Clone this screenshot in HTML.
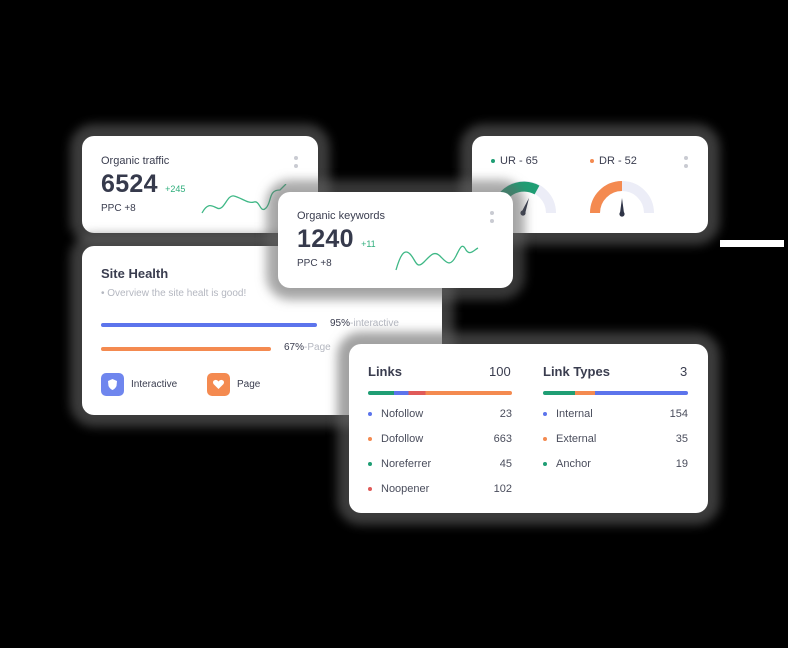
<!DOCTYPE html>
<html><head><meta charset="utf-8"><style>
*{box-sizing:border-box;margin:0;padding:0}
body{width:788px;height:648px;background:#000;position:relative;overflow:hidden;font-family:"Liberation Sans",sans-serif;color:#3a3d4f}
.c{position:absolute;background:#fff;border-radius:12px;box-shadow:0 0 10px 12px rgba(100,100,100,.6)}
.dots{position:absolute;width:4px}
.dots i{display:block;width:4px;height:4px;border-radius:50%;background:#c9cbd2;margin-bottom:4px}
.t{position:absolute;font-size:11px;color:#3a3d4f}
.big{position:absolute;font-size:25px;font-weight:bold;color:#363a4c;letter-spacing:.3px}
.g{color:#2fae7c;font-size:9px;letter-spacing:0}
.dot{display:inline-block;width:5px;height:5px;border-radius:50%;margin-right:9px;vertical-align:middle}
.row{position:absolute;font-size:11px;color:#4a4d5c;display:flex;justify-content:space-between}
</style></head><body>
<div style="position:absolute;left:720px;top:240px;width:64px;height:7px;background:#fff"></div>

<div class="c" style="left:82px;top:136px;width:236px;height:97px">
<div class="t" style="left:19px;top:19px">Organic traffic</div>
<div class="big" style="left:19px;top:34px">6524 <span class="g" style="font-weight:normal">+245</span></div>
<div class="t" style="left:19px;top:67px;font-size:10px">PPC +8</div>
<div class="dots" style="left:212px;top:20px"><i></i><i></i></div>
<svg style="position:absolute;left:118px;top:48px" width="96" height="34"><path d="M2 29 C8 18 12 22 17 24 C24 28 27 10 34 12 C42 14 48 20 54 18 C60 16 60 30 66 24 C72 18 68 6 80 6 L86 0" fill="none" stroke="#3fb886" stroke-width="1.3"/></svg>
</div>

<div class="c" style="left:82px;top:246px;width:360px;height:169px">
<div class="t" style="left:19px;top:20px;font-size:13px;font-weight:bold">Site Health</div>
<div class="t" style="left:19px;top:42px;font-size:10px;color:#b4b7c0">• Overview the site healt is good!</div>
<div style="position:absolute;left:19px;top:77px;width:216px;height:4px;border-radius:2px;background:#5c74ec"></div>
<div class="t" style="left:248px;top:72px;font-size:10px">95%<span style="color:#b4b7c0">-interactive</span></div>
<div style="position:absolute;left:19px;top:101px;width:170px;height:4px;border-radius:2px;background:#f48a50"></div>
<div class="t" style="left:202px;top:96px;font-size:10px">67%<span style="color:#b4b7c0">-Page</span></div>
<div style="position:absolute;left:19px;top:127px;width:23px;height:23px;border-radius:5px;background:#6f86ee"><svg width="23" height="23"><path d="M11.5 6 L16 8 L15.5 13 Q14 16 11.5 17 Q9 16 7.5 13 L7 8Z" fill="#fff"/></svg></div>
<div class="t" style="left:49px;top:133px;font-size:10px">Interactive</div>
<div style="position:absolute;left:125px;top:127px;width:23px;height:23px;border-radius:5px;background:#f48a50"><svg width="23" height="23"><path d="M11.5 16 L6.5 11 Q5 8 8 7 Q10 6.5 11.5 8.5 Q13 6.5 15 7 Q18 8 16.5 11Z" fill="#fff"/></svg></div>
<div class="t" style="left:155px;top:133px;font-size:10px">Page</div>
</div>

<div class="c" style="left:472px;top:136px;width:236px;height:97px">
<div class="t" style="left:19px;top:19px"><span class="dot" style="background:#1f9e74;width:4px;height:4px;margin-right:5px"></span>UR - 65</div>
<div class="t" style="left:118px;top:19px"><span class="dot" style="background:#f48a50;width:4px;height:4px;margin-right:5px"></span>DR - 52</div>
<div class="dots" style="left:212px;top:20px"><i></i><i></i></div>
<svg style="position:absolute;left:0;top:0" width="236" height="97">
<path d="M25 77 A27 27 0 0 1 79 77" fill="none" stroke="#ecedf7" stroke-width="10"/>
<path d="M25 77 A27 27 0 0 1 65 54" fill="none" stroke="#1f9e74" stroke-width="10"/>
<path d="M123 77 A27 27 0 0 1 177 77" fill="none" stroke="#ecedf7" stroke-width="10"/>
<path d="M123 77 A27 27 0 0 1 150 50" fill="none" stroke="#f48a50" stroke-width="10"/>
<path d="M49 77 L57 62 L53 78Z" fill="#2f3447"/><circle cx="51" cy="77" r="2.6" fill="#2f3447"/>
<path d="M148 77 L150 62 L152 77Z" fill="#2f3447"/><circle cx="150" cy="78" r="2.6" fill="#2f3447"/>
</svg>
</div>

<div class="c" style="left:278px;top:192px;width:235px;height:96px;box-shadow:0 0 10px 12px rgba(100,100,100,.55),0 2px 8px rgba(0,0,0,.1)">
<div class="t" style="left:19px;top:18px">Organic keywords</div>
<div class="big" style="left:19px;top:33px">1240 <span class="g" style="font-weight:normal">+11</span></div>
<div class="t" style="left:19px;top:66px;font-size:10px">PPC +8</div>
<div class="dots" style="left:212px;top:19px"><i></i><i></i></div>
<svg style="position:absolute;left:116px;top:46px" width="86" height="36"><path d="M2 32 C6 18 10 10 16 16 C22 22 22 32 30 24 C36 18 40 12 46 18 C52 24 56 30 62 18 C66 10 68 4 72 12 C76 18 80 12 84 10" fill="none" stroke="#3fb886" stroke-width="1.3"/></svg>
</div>

<div class="c" style="left:349px;top:344px;width:359px;height:169px">
<div class="t" style="left:19px;top:20px;font-size:13px;font-weight:bold">Links</div>
<div class="t" style="left:140px;top:20px;font-size:13px">100</div>
<div style="position:absolute;left:19px;top:47px;width:144px;height:4px;border-radius:2px;background:linear-gradient(90deg,#1f9e74 0 18%,#5c74ec 18% 28%,#e05a58 28% 40%,#f48a50 40%)"></div>
<div class="row" style="left:19px;top:64px;width:144px"><span><span class="dot" style="background:#5c74ec;width:4px;height:4px"></span>Nofollow</span><span>23</span></div>
<div class="row" style="left:19px;top:89px;width:144px"><span><span class="dot" style="background:#f48a50;width:4px;height:4px"></span>Dofollow</span><span>663</span></div>
<div class="row" style="left:19px;top:114px;width:144px"><span><span class="dot" style="background:#1f9e74;width:4px;height:4px"></span>Noreferrer</span><span>45</span></div>
<div class="row" style="left:19px;top:139px;width:144px"><span><span class="dot" style="background:#e05a58;width:4px;height:4px"></span>Noopener</span><span>102</span></div>
<div class="t" style="left:194px;top:20px;font-size:13px;font-weight:bold">Link Types</div>
<div class="t" style="left:331px;top:20px;font-size:13px">3</div>
<div style="position:absolute;left:194px;top:47px;width:145px;height:4px;border-radius:2px;background:linear-gradient(90deg,#1f9e74 0 22%,#f48a50 22% 36%,#5c74ec 36%)"></div>
<div class="row" style="left:194px;top:64px;width:145px"><span><span class="dot" style="background:#5c74ec;width:4px;height:4px"></span>Internal</span><span>154</span></div>
<div class="row" style="left:194px;top:89px;width:145px"><span><span class="dot" style="background:#f48a50;width:4px;height:4px"></span>External</span><span>35</span></div>
<div class="row" style="left:194px;top:114px;width:145px"><span><span class="dot" style="background:#1f9e74;width:4px;height:4px"></span>Anchor</span><span>19</span></div>
</div>
</body></html>
